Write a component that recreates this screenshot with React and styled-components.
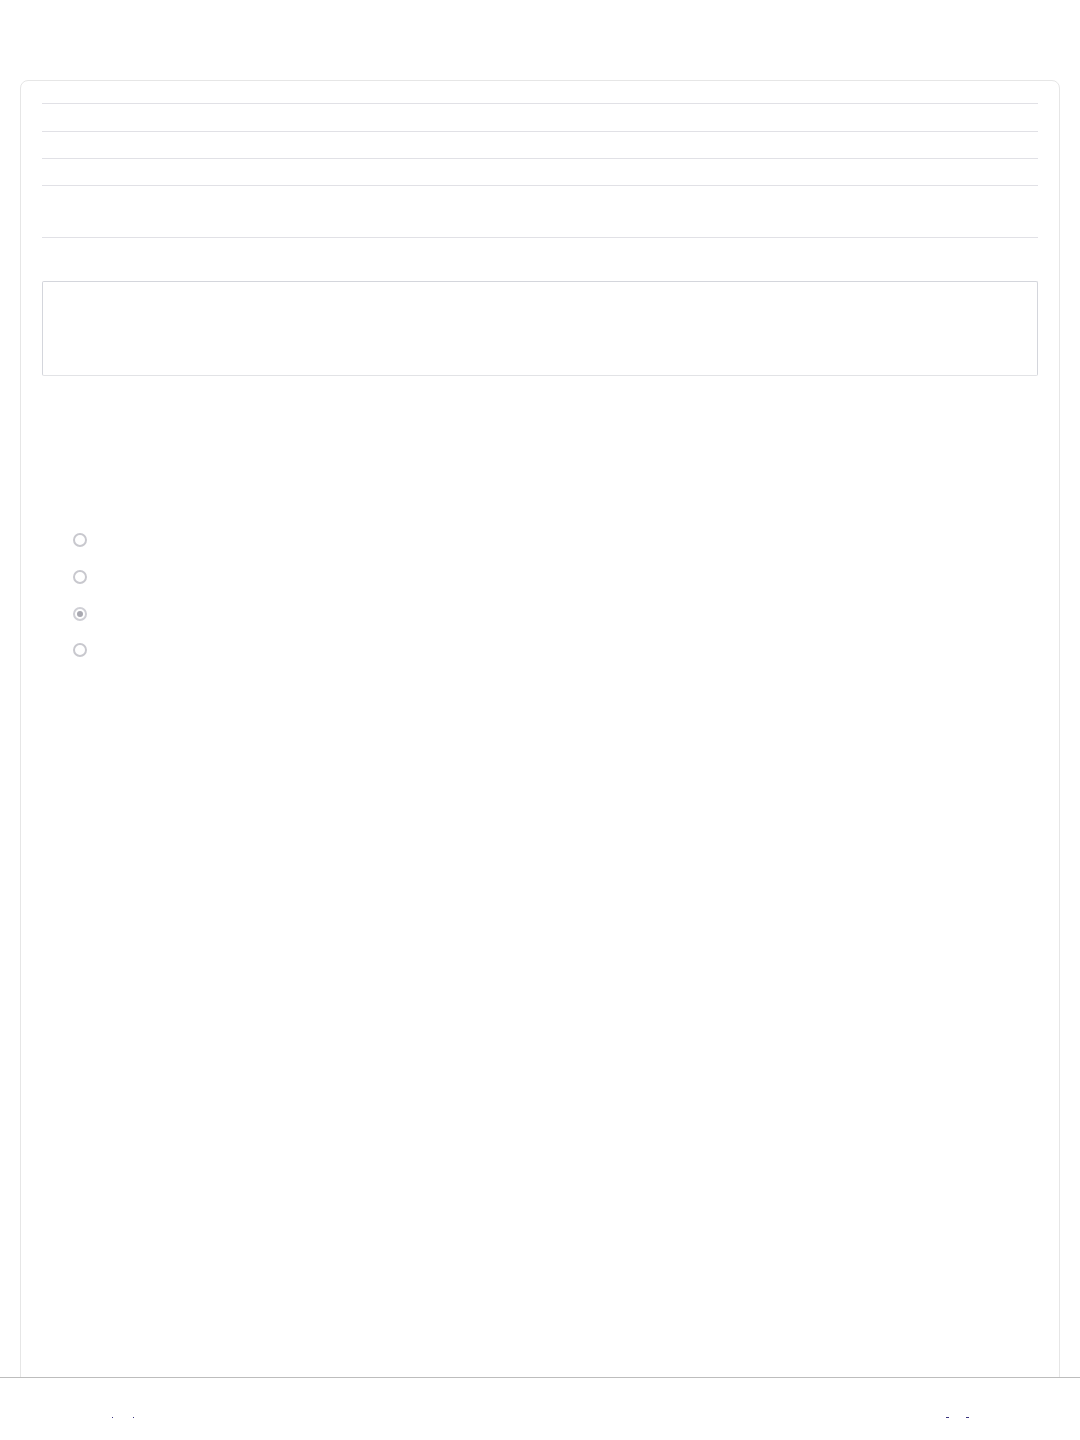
import React from "react";
import styled, { createGlobalStyle } from "styled-components";

const Global = createGlobalStyle`
  html, body { margin: 0; padding: 0; background: #ffffff; }
  body { font-family: "Liberation Sans", Arial, sans-serif; color: #333; }
`;

const Page = styled.div`
  padding: 80px 20px 0 20px;
`;

const Card = styled.section`
  border: 1px solid #e6e6e6;
  border-radius: 8px;
  padding: 22px 21px;
  min-height: 1360px;
  box-sizing: border-box;
  background: #fff;
`;

const Table = styled.div`
  display: flex;
  flex-direction: column;
  border-bottom: 1px solid #e1e1e6;
`;

const Row = styled.div`
  border-top: 1px solid #e1e1e6;
  height: ${(p) => p.$h}px;
`;

const TextBox = styled.div`
  margin-top: 43px;
  height: 93px;
  border: 1px solid #d4d6dc;
  border-bottom-color: #e2e3e6;
  border-radius: 2px;
`;

const RadioGroup = styled.div`
  margin-top: 146px;
  display: flex;
  flex-direction: column;
  padding-left: 73px;
  margin-left: -42px;
`;

const RadioRow = styled.label`
  height: 36.7px;
  display: flex;
  align-items: center;
`;

const Radio = styled.input.attrs({ type: "radio", disabled: true })`
  appearance: none;
  -webkit-appearance: none;
  box-sizing: border-box;
  width: 14px;
  height: 14px;
  margin: 0;
  border: 2px solid #c8c8ce;
  border-radius: 50%;
  background: #fff;
  display: grid;
  place-items: center;
  &:checked {
    border-color: #cfcfd5;
  }
  &:checked::after {
    content: "";
    width: 6px;
    height: 6px;
    border-radius: 50%;
    background: #a9a9b1;
  }
`;

const Footer = styled.footer`
  position: fixed;
  left: 0;
  right: 0;
  bottom: 0;
  height: 63px;
  border-top: 1px solid #bdbdbd;
  background: #fff;
  display: flex;
  justify-content: space-between;
  align-items: flex-start;
  padding: 39px 111px 0 112px;
  box-sizing: border-box;
`;

const MarkGroup = styled.div`
  display: flex;
  gap: ${(p) => p.$gap}px;
`;

const Mark = styled.span`
  display: block;
  width: ${(p) => p.$w}px;
  height: 1px;
  background: #3b3480;
`;

export default function App() {
  const rows = [27, 26, 26, 51];
  return (
    <>
      <Global />
      <Page>
        <Card>
          <Table>
            {rows.map((h, i) => (
              <Row key={i} $h={h} />
            ))}
          </Table>
          <TextBox />
          <RadioGroup>
            {[false, false, true, false].map((c, i) => (
              <RadioRow key={i}>
                <Radio name="choice" defaultChecked={c} />
              </RadioRow>
            ))}
          </RadioGroup>
        </Card>
      </Page>
      <Footer>
        <MarkGroup $gap={20}>
          <Mark $w={1} />
          <Mark $w={1} />
        </MarkGroup>
        <MarkGroup $gap={17}>
          <Mark $w={3} />
          <Mark $w={3} />
        </MarkGroup>
      </Footer>
    </>
  );
}
